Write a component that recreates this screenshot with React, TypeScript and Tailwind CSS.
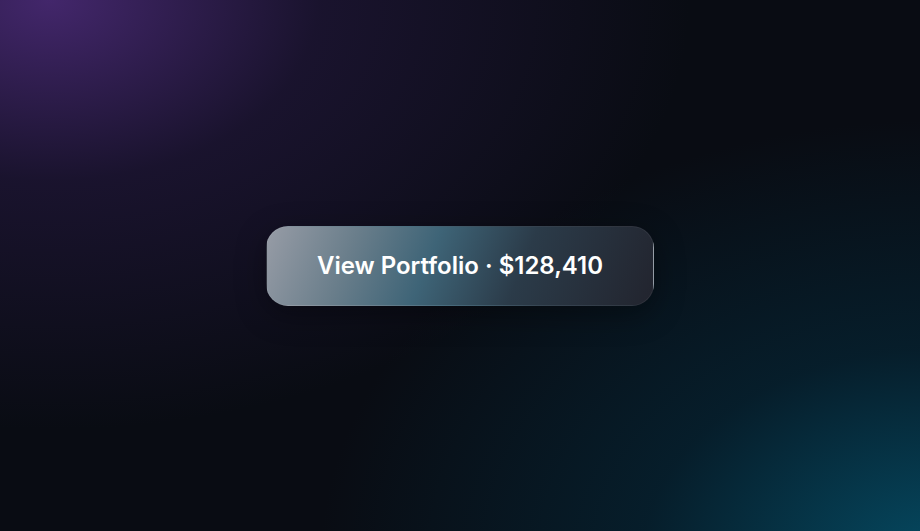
export default function App() {
  return (
    <div className="relative flex h-[531px] w-[920px] items-center justify-center overflow-hidden bg-[#090c13] font-['Inter',sans-serif]">
      <div className="pointer-events-none absolute inset-0 bg-[radial-gradient(ellipse_640px_430px_at_50px_0px,rgba(70,40,112,0.95),rgba(42,26,72,0.5)_42%,transparent_100%)]" />
      <div className="pointer-events-none absolute inset-0 bg-[radial-gradient(ellipse_620px_440px_at_940px_560px,rgba(5,74,98,1),rgba(4,44,62,0.55)_48%,transparent_100%)]" />
      <button className="relative mt-[1px] h-[80px] w-[388px] rounded-[22px] border border-white/[0.06] bg-[linear-gradient(112deg,#979ca6_0%,#6a7e8b_22%,#3e6477_42%,#2b3b49_65%,#22242e_100%)] text-[24px] font-semibold text-white shadow-[0_8px_30px_rgba(0,0,0,0.35)]">
        View Portfolio · $128,410
      </button>
    </div>
  );
}
